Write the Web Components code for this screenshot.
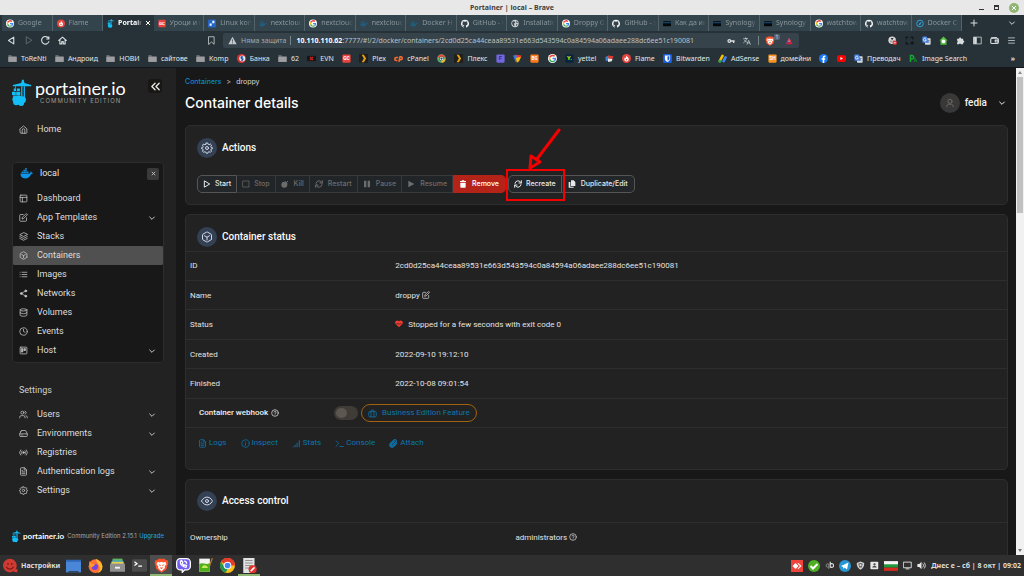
<!DOCTYPE html>
<html lang="en">
<head>
<meta charset="utf-8">
<title>Portainer | local – Brave</title>
<style>
  html, body { margin: 0; height: 100%; }
  body { background: #181818; color: #e6e6e6; font-family: Roboto, "Liberation Sans", sans-serif; font-size: 8px; line-height: 12px; overflow: hidden; }
</style>
</head>
<body>
<desktop-screen>
  <window-title slot="top">Portainer | local – Brave</window-title>
  <tab-strip slot="top">
    <browser-tab icon="google">Google</browser-tab>
    <browser-tab icon="flame">Flame</browser-tab>
    <browser-tab icon="crane" active>Portainer</browser-tab>
    <browser-tab icon="gc">Уроци и н</browser-tab>
    <browser-tab icon="linux">Linux kom</browser-tab>
    <browser-tab icon="dockerdim">nextcloud</browser-tab>
    <browser-tab icon="google">nextcloud</browser-tab>
    <browser-tab icon="dockerdim">nextcloud</browser-tab>
    <browser-tab icon="dockerdim">Docker Hu</browser-tab>
    <browser-tab icon="github">GitHub - n</browser-tab>
    <browser-tab icon="globe">Installatio</browser-tab>
    <browser-tab icon="google">Droppy G</browser-tab>
    <browser-tab icon="github">GitHub - s</browser-tab>
    <browser-tab icon="nas">Как да ин</browser-tab>
    <browser-tab icon="nas">Synology</browser-tab>
    <browser-tab icon="nas">Synology</browser-tab>
    <browser-tab icon="google">watchtow</browser-tab>
    <browser-tab icon="github">watchtow</browser-tab>
    <browser-tab icon="edgeblue">Docker Co</browser-tab>
  </tab-strip>
  <address-bar slot="top"></address-bar>
  <bookmark-bar slot="top">
    <book-mark icon="folder">ToReNti</book-mark>
    <book-mark icon="folder">Андроид</book-mark>
    <book-mark icon="folder">НОВИ</book-mark>
    <book-mark icon="folder">сайтове</book-mark>
    <book-mark icon="folder">Komp</book-mark>
    <book-mark icon="bank">Банка</book-mark>
    <book-mark icon="folder">62</book-mark>
    <book-mark icon="evn">EVN</book-mark>
    <book-mark icon="gc"></book-mark>
    <book-mark icon="plex">Plex</book-mark>
    <book-mark icon="cpanel">cPanel</book-mark>
    <book-mark icon="rainbow"></book-mark>
    <book-mark icon="plex">Плекс</book-mark>
    <book-mark icon="fviolet"></book-mark>
    <book-mark icon="shieldmix"></book-mark>
    <book-mark icon="bg"></book-mark>
    <book-mark icon="google"></book-mark>
    <book-mark icon="yettel">yettel</book-mark>
    <book-mark icon="cubes"></book-mark>
    <book-mark icon="flame">Flame</book-mark>
    <book-mark icon="bitwarden">Bitwarden</book-mark>
    <book-mark icon="adsense">AdSense</book-mark>
    <book-mark icon="sh">домейни</book-mark>
    <book-mark icon="facebook"></book-mark>
    <book-mark icon="youtube"></book-mark>
    <book-mark icon="translate">Преводач</book-mark>
    <book-mark icon="imgsearch">Image Search</book-mark>
  </bookmark-bar>

  <side-bar slot="side">
    <nav-item icon="home">Home</nav-item>
    <environment-box name="local">
      <nav-item icon="layout">Dashboard</nav-item>
      <nav-item icon="edit" more>App Templates</nav-item>
      <nav-item icon="layers">Stacks</nav-item>
      <nav-item icon="box" active>Containers</nav-item>
      <nav-item icon="list">Images</nav-item>
      <nav-item icon="share">Networks</nav-item>
      <nav-item icon="database">Volumes</nav-item>
      <nav-item icon="clock">Events</nav-item>
      <nav-item icon="trello" more>Host</nav-item>
    </environment-box>
    <nav-group name="Settings">
      <nav-item icon="users" more>Users</nav-item>
      <nav-item icon="drive" more>Environments</nav-item>
      <nav-item icon="radio">Registries</nav-item>
      <nav-item icon="file" more>Authentication logs</nav-item>
      <nav-item icon="settings" more>Settings</nav-item>
    </nav-group>
  </side-bar>

  <page-header slot="main" heading="Container details" user="fedia"></page-header>
  <panel-card slot="main" icon="settings" heading="Actions" plain>
    <action-bar></action-bar>
  </panel-card>
  <panel-card slot="main" icon="box" heading="Container status">
    <status-table></status-table>
  </panel-card>
  <panel-card slot="main" icon="eye" heading="Access control" roomy>
    <owner-table></owner-table>
  </panel-card>

  <task-bar slot="bottom"></task-bar>
</desktop-screen>

<script>
const line = (body, w = 2) => `<svg viewBox="0 0 24 24" fill="none" stroke="currentColor" stroke-width="${w}" stroke-linecap="round" stroke-linejoin="round">${body}</svg>`;
const art = (body, box = '0 0 24 24') => `<svg viewBox="${box}">${body}</svg>`;
const googleG = '<path fill="#ea4335" d="M12 6c1.700 0 3.100.600 4.200 1.600l3-3A10 10 0 0 0 3.200 7.600l3.500 2.700A6 6 0 0 1 12 6z"/><path fill="#4285f4" d="M21.600 12.200c0-.700-.100-1.300-.200-1.900H12v3.900h5.400a4.600 4.600 0 0 1-2 3l3.300 2.600a9.800 9.800 0 0 0 2.900-7.600z"/><path fill="#fbbc05" d="M6.700 13.700a6 6 0 0 1 0-3.500L3.200 7.600a9.800 9.800 0 0 0 0 8.800z"/><path fill="#34a853" d="M12 22c2.700 0 5-.900 6.700-2.400l-3.300-2.500a6 6 0 0 1-8.700-3.300l-3.500 2.700A10 10 0 0 0 12 22z"/>';
const crane = '<g fill="#13bef9"><path d="M12 0h2l1 4 8 2.500V8H1V6.500l10-2.500z"/><path d="M11 8h1.500v13H11zM14 8h1.500v13H14zM3.500 8h1v3h-1z"/><path d="M2 10.500h3v3H2zM6 10.500h3.500v3H6zM0 14.500h4.500v4H0zM5 14.500h5v4H5zM1 19h9v1.500H1z"/><circle cx="4.500" cy="23.500" r="4"/><circle cx="12.500" cy="24" r="4.200"/><circle cx="8" cy="22.500" r="3.500"/><circle cx="5" cy="27" r="3.600"/><circle cx="11" cy="28" r="3.500"/><circle cx="8" cy="26" r="4"/></g>';
const whale = (c) => `<path fill="${c}" d="M1 12h17c1-.300 1.500-1.500 1.200-3.200l.800-.800c1.200.700 1.600 1.600 1.500 2.500 1 0 1.800.200 2.500.700-.700 1.600-2 2-3.600 2C18.600 18 15 21 9.500 21 3.500 21 .700 17.500 1 12zM3 8.500h2.700v2.700H3zM6.300 8.500H9v2.700H6.300zM9.600 8.500h2.700v2.700H9.600zM12.900 8.500h2.700v2.700h-2.700zM6.300 5.200H9v2.700H6.300zM9.600 5.200h2.700v2.700H9.600zM9.600 2h2.700v2.600H9.600z"/>`;
const lion = '<path fill="#fb542b" d="M7 1h10l2 2.500 2.500-.500L23 7l-3 11-8 5.500L4 18 1 7l1.500-4 2.500.500z"/><path fill="#fff" d="M6 6l3 1 3-1 3 1 3-1 2 4-3 3 .500 3L12 21l-5.500-5L7 13 4 10z"/><path fill="#fb542b" d="M7 10l4 1-1 2zM17 10l-4 1 1 2zM9 15h6l-3 3z"/>';
const tile = (bg, t, fg = '#fff', size = 13) => art(`<rect x="1" y="1" width="22" height="22" rx="3" fill="${bg}"/><text x="12" y="17" text-anchor="middle" font-family="Roboto, sans-serif" font-weight="700" font-size="${size}" fill="${fg}">${t}</text>`);
const translateArt = '<rect x="8" y="6" width="15" height="17" rx="2" fill="#d9dde3"/><path d="M14 12h7M17.500 10v2c0 3-2 5-3 6M15 14c1 2 3 3.500 5 4" stroke="#5f7185" stroke-width="1.500" fill="none"/><path fill="#4680e0" d="M3 1h10l5 17H3a2 2 0 0 1-2-2V3a2 2 0 0 1 2-2z"/><path d="M11 7.500a4 4 0 1 0 .500 3H8" stroke="#fff" stroke-width="2" fill="none"/>';

const ICONS = {
  home: line('<path d="M3 10l9-7.500 9 7.500v10a2 2 0 0 1-2 2H5a2 2 0 0 1-2-2z"/><path d="M8.500 22v-8.500a3.500 3.500 0 0 1 7 0V22"/>'),
  layout: line('<rect x="3" y="3" width="18" height="18" rx="2"/><path d="M3 9h18M9 21V9"/>'),
  edit: line('<path d="M11 4H4a2 2 0 0 0-2 2v14a2 2 0 0 0 2 2h14a2 2 0 0 0 2-2v-7"/><path d="M18.500 2.500a2.100 2.100 0 0 1 3 3L12 15l-4 1 1-4z"/>'),
  layers: line('<path d="M12 2L2 7l10 5 10-5zM2 12l10 5 10-5M2 17l10 5 10-5"/>'),
  box: line('<path d="M21 16V8a2 2 0 0 0-1-1.700l-7-4a2 2 0 0 0-2 0l-7 4A2 2 0 0 0 3 8v8a2 2 0 0 0 1 1.700l7 4a2 2 0 0 0 2 0l7-4a2 2 0 0 0 1-1.700z"/><path d="M7 9.500l5 3 5-3M12 12.500V18"/>'),
  list: line('<path d="M8 6h13M8 12h13M8 18h13M3 6h.010M3 12h.010M3 18h.010"/>'),
  share: line('<g fill="currentColor"><circle cx="18" cy="5" r="2.500"/><circle cx="6" cy="12" r="2.500"/><circle cx="18" cy="19" r="2.500"/></g><path d="M8.500 13.500l7 4M15.500 6.500l-7 4"/>'),
  database: line('<ellipse cx="12" cy="5" rx="9" ry="3"/><path d="M21 12c0 1.700-4 3-9 3s-9-1.300-9-3M3 5v14c0 1.700 4 3 9 3s9-1.300 9-3V5"/>'),
  clock: line('<circle cx="12" cy="12" r="10"/><path d="M12 6v6l4 2"/>'),
  trello: line('<rect x="3" y="3" width="18" height="18" rx="2"/><path d="M7 7h3v9H7zM14 7h3v5h-3z" fill="currentColor"/>'),
  users: line('<path d="M16 21v-2a4 4 0 0 0-4-4H6a4 4 0 0 0-4 4v2"/><circle cx="9" cy="7" r="4"/><path d="M22 21v-2a4 4 0 0 0-3-3.900M16 3.100a4 4 0 0 1 0 7.800"/>'),
  drive: line('<path d="M22 13H2M5.500 5.500L2 13v5a2 2 0 0 0 2 2h16a2 2 0 0 0 2-2v-5l-3.500-7.500A2 2 0 0 0 16.800 4H7.200a2 2 0 0 0-1.700 1.500zM6 16.500h.010M10 16.500h.010"/>'),
  radio: line('<circle cx="12" cy="12" r="2" fill="currentColor"/><path d="M16.200 7.800a6 6 0 0 1 0 8.500M7.800 16.200a6 6 0 0 1 0-8.500M19.500 5a10 10 0 0 1 0 14M4.500 19a10 10 0 0 1 0-14"/>'),
  file: line('<path d="M14 2H6a2 2 0 0 0-2 2v16a2 2 0 0 0 2 2h12a2 2 0 0 0 2-2V8zM14 2v6h6M16 13H8M16 17H8M10 9H8"/>'),
  settings: line('<circle cx="12" cy="12" r="3"/><path d="M10.500 2h3l.800 2.600 2 .800L18.700 4 21 6.300l-1.400 2.400.800 2 2.600.800v1.500l-2.600 1-.800 2 1.400 2.400-2.300 2.300-2.400-1.300-2 .800-.800 2.300h-3l-.800-2.300-2-.800-2.400 1.300L3 18.400 4.400 16l-.800-2-2.600-1v-1.500l2.600-.800.800-2L3 6.300 5.300 4l2.400 1.400 2-.800z"/>'),
  eye: line('<path d="M1 12s4-8 11-8 11 8 11 8-4 8-11 8-11-8-11-8z"/><circle cx="12" cy="12" r="3"/>'),
  user: line('<circle cx="12" cy="8" r="5"/><path d="M4 21c0-4 3-6 5-6h6c2 0 5 2 5 6"/>'),
  down: line('<path d="M5 9l7 7 7-7"/>', 3),
  collapse: line('<path d="M11 19l-7-7 7-7M20 19l-7-7 7-7"/>', 3),
  close: line('<path d="M5 5l14 14M19 5L5 19"/>', 4),
  help: line('<circle cx="12" cy="12" r="10"/><path d="M9 9a3 3 0 0 1 6 1c0 2-3 2.500-3 4M12 17.500h.010"/>'),
  info: line('<circle cx="12" cy="12" r="10"/><path d="M12 17v-6M12 7.500h.010"/>'),
  play: line('<path d="M5 3l15 9-15 9z"/>', 3),
  playfill: art('<path fill="currentColor" d="M4 2l18 10L4 22z"/>'),
  stop: line('<rect x="3" y="3" width="18" height="18"/>', 2),
  bomb: art('<circle cx="10" cy="14" r="9" fill="currentColor"/><path d="M13 4l6 6M17 7l4-4" stroke="currentColor" stroke-width="3"/>'),
  sync: line('<path d="M3 10a9 9 0 0 1 16-4l3 3M21 14a9 9 0 0 1-16 4l-3-3M22 2v7h-7M2 22v-7h7"/>', 3),
  pause: art('<path fill="currentColor" d="M3 2h7v20H3zM14 2h7v20h-7z"/>'),
  trash: art('<path fill="currentColor" d="M3 3h5l1-2h6l1 2h5v3H3zM4 8h16v13a2 2 0 0 1-2 2H6a2 2 0 0 1-2-2z"/>'),
  copy: art('<path fill="currentColor" d="M9 1h8l5 5v12H9zM2 6h5v14h10v3H2z"/>'),
  heart: art('<path fill="#ef3b30" d="M12 22L2 12a6 6 0 0 1 10-8 6 6 0 0 1 10 8z"/><path d="M4 11h4l1-2 3 5 3-4 1 1h4" fill="none" stroke="#222" stroke-width="1.500"/>'),
  bars: art('<path fill="currentColor" d="M2 19h3v3H2zM7 15h3v7H7zM12 10h3v12h-3zM18 3h3v19h-3z" opacity=".8"/>'),
  prompt: line('<path d="M3 5l7 7-7 7M13 20h9"/>', 2),
  clip: line('<path d="M21 11l-9 9a5.500 5.500 0 0 1-8-8l9-9a3.700 3.700 0 0 1 5.500 5.500l-9 9a1.800 1.800 0 0 1-3-3l8-8"/>', 3),
  briefcase: line('<rect x="2" y="7" width="20" height="14" rx="3"/><path d="M8 21V5a2 2 0 0 1 2-2h4a2 2 0 0 1 2 2v16"/>'),
  back: line('<path d="M18 3v18L4 12z"/>', 3),
  forward: line('<path d="M6 3v18l14-9z"/>', 2),
  reload: line('<path d="M20 6a10 10 0 1 0 1 9M21 2v6h-6"/>', 3),
  house: line('<path d="M2 12L12 3l10 9M5 10v11h5v-6h4v6h5V10"/>', 3),
  bookmark: line('<path d="M5 2h14v20l-7-6-7 6z"/>', 2),
  warn: art('<path fill="#c3c9cc" d="M12 2l11 20H1z"/><path d="M12 9v6M12 17v3" stroke="#36434a" stroke-width="2"/>'),
  key: art('<circle cx="7" cy="12" r="4" fill="none" stroke="currentColor" stroke-width="4"/><path d="M11 12h12M20 12v6" stroke="currentColor" stroke-width="4"/>'),
  lang: line('<path d="M2 5h12M8 2v3M11 5c-1 5-4 9-9 12M4 9c2 3 5 6 8 7M12 22l5-12 5 12M14 18h6"/>'),
  menu: line('<path d="M4 5h16M4 12h16M4 19h16"/>', 2),
  panel: line('<rect x="2" y="3" width="20" height="18"/><path d="M3 4h6v16H3z" fill="currentColor"/>', 2),
  wallet: line('<rect x="2" y="6" width="20" height="14" rx="3"/><path d="M4 5l13-1M14 11h8v5h-8z"/>', 3),
  puzzle: art('<path fill="currentColor" d="M3 7h5a3 3 0 1 1 6 0h5v5a3 3 0 1 1 0 6v4h-6a3 3 0 0 0-5 0H3v-5a3 3 0 0 0 0-5z"/>'),
  blocked: art('<circle cx="11" cy="11" r="10" fill="#d8d8d8"/><path d="M8 5l3 5 3-5M8 12v5M14 12v5" stroke="#444" stroke-width="2"/><circle cx="18" cy="18" r="6" fill="#d93a3a"/><path d="M15 18h6" stroke="#fff" stroke-width="2"/>'),
  capture: line('<g stroke="#11171a"><path d="M3 8V3h5M16 3h5v5M21 15v6M3 15v6h6M18 16v6M15 19h7"/></g>', 3),
  greenhouse: art('<path fill="#55c23c" d="M12 1l11 11h-3v11H4V12H1z"/><circle cx="12" cy="14" r="5" fill="#fff"/>'),
  brave: art(lion),
  rewards: art('<path fill="#ff4724" d="M12 2l6 10H7z"/><path fill="#c08bd0" d="M7 13l5-2 6 2-6 3z"/><path fill="#8a3bb0" d="M12 2L1 22l8-6z"/><path fill="#d8203a" d="M1 22h22l-5-9-6 3z"/>'),
  plus: line('<path d="M12 3v18M3 12h18"/>', 3),
  google: art('<circle cx="12" cy="12" r="12" fill="#fff"/>' + googleG),
  flame: art('<circle cx="12" cy="12" r="12" fill="#e8443b"/><path fill="#fff" d="M12 4c1 4 6 5 6 10a6 6 0 0 1-12 0c0-2 1-4 2-5l2 2z"/><circle cx="12" cy="15" r="2" fill="#e8443b"/>'),
  crane: art(crane, '0 0 24 32'),
  whale: art(whale('#0d96ea')),
  dockerdim: art(whale('#225b7c')),
  gc: tile('#e8443b', 'GC', '#fff', 13),
  linux: art('<rect width="24" height="24" rx="3" fill="#2465c8"/><path fill="#fff" d="M13 4h6v7h-6zM5 12h6v7H5z"/>'),
  github: art('<path fill="#f2f2f2" d="M12 .500a12 12 0 0 0-3.800 23.400c.600.100.800-.300.800-.600v-2c-3.300.700-4-1.600-4-1.600-.600-1.400-1.400-1.800-1.400-1.800-1-.700.100-.700.100-.700 1.200 0 1.900 1.200 1.900 1.200 1 1.800 2.800 1.300 3.500 1 0-.800.400-1.300.700-1.600-2.700-.300-5.500-1.300-5.500-6 0-1.200.500-2.300 1.300-3.100-.200-.400-.600-1.600 0-3.200 0 0 1-.300 3.400 1.200a11 11 0 0 1 6 0c2.300-1.500 3.300-1.200 3.300-1.200.600 1.600.200 2.800 0 3.200.900.800 1.300 1.900 1.300 3.200 0 4.600-2.800 5.600-5.500 5.900.500.400.900 1 .900 2.200v3.300c0 .300.100.700.800.600A12 12 0 0 0 12 .500z"/>'),
  globe: art('<circle cx="12" cy="12" r="11" fill="#c8ced1"/><path fill="#3a4850" d="M5 5l6 1 2 4-5 3 3 4-3 3-5-7zM15 3l6 6-4 2zM15 14l5 1-4 5z"/>'),
  nas: art('<rect x="0" y="5" width="24" height="15" rx="2" fill="#05080a"/><path fill="#1c79c0" d="M0 9h24v2H0z"/>'),
  edgeblue: art('<circle cx="12" cy="12" r="10" fill="none" stroke="#2c9fd8" stroke-width="3"/><path fill="#2c9fd8" d="M7 19l3-8 7-5-3 8z"/>'),
  folder: art('<path fill="#77797e" d="M1 3h8l2 3h12v15H1z"/><path fill="#9d9ea2" d="M1 8h22v13H1z"/>'),
  bank: art('<circle cx="12" cy="12" r="12" fill="#d8322f"/><circle cx="14" cy="12" r="8" fill="#e8eef6"/><path fill="#1b4fa0" d="M10 6h7l-3 5 4 1-2 6h-6l3-5-4-1z"/>'),
  evn: art('<rect x="0" y="5" width="24" height="14" fill="#161616"/><path stroke="#c22" stroke-width="3" d="M8 8l8 8M16 8l-8 8"/>'),
  plex: art('<rect width="24" height="24" fill="#1f1f1f"/><path fill="#e5a00d" d="M7 2h6l6 10-6 10H7l6-10z"/>'),
  cpanel: art('<g fill="none" stroke="#ff6c2c" stroke-width="4"><path d="M11 9H6a4 4 0 0 0 0 8h3M13 21l3-14h2a4 4 0 0 1 0 8h-3"/></g>'),
  rainbow: art('<circle cx="12" cy="12" r="9" fill="none" stroke="#58b368" stroke-width="5"/><path d="M4 9a9 9 0 0 1 16 0" fill="none" stroke="#ef4b3d" stroke-width="5"/><path d="M20 14a9 9 0 0 1-8 7" fill="none" stroke="#f5b82e" stroke-width="5"/><circle cx="12" cy="12" r="5" fill="#e9f1f5"/><circle cx="12" cy="12" r="3" fill="#345"/>'),
  fviolet: tile('#7466dd', 'F', '#352b8a', 16),
  shieldmix: art('<path fill="#3978e8" d="M0 4l10-2 3 8-6 12z"/><path fill="#e8382f" d="M8 2l15 2-4 9-8-3z"/><path fill="#fbbc05" d="M8 10l13-2-5 11-6 4z"/>'),
  bg: tile('#ff7a1a', 'BG', '#fff', 12),
  yettel: tile('#08243f', 'Y.', '#b4ff00', 16),
  cubes: art('<path fill="#3b82d0" d="M1 8l9-4v13l-8 2z"/><path fill="#e23c2e" d="M8 4l15 2-4 8-10-2z"/><path fill="#e8e8e8" d="M8 12l12 1-2 6-10 2z"/>'),
  bitwarden: art('<rect width="24" height="24" rx="4" fill="#175ddc"/><path fill="#fff" d="M5 4h14v9c0 4-4 6-7 8-3-2-7-4-7-8z"/><path fill="#175ddc" d="M12 6h5v7c0 2-3 4-5 5z"/>'),
  adsense: art('<path stroke="#fbbc04" stroke-width="7" stroke-linecap="round" d="M12 5L5 18"/><path stroke="#4285f4" stroke-width="7" stroke-linecap="round" d="M20 9l-5 10"/><circle cx="5" cy="19" r="4" fill="#34a853"/>'),
  sh: tile('#f7941d', 'SH', '#fff', 13),
  facebook: art('<circle cx="12" cy="12" r="12" fill="#1877f2"/><path fill="#fff" d="M10 24v-9H7v-4h3V9c0-3 2-5 5-5h2v4h-2c-1 0-1 1-1 1v2h3l-1 4h-2v9z"/>'),
  youtube: art('<rect y="3" width="24" height="18" rx="5" fill="#f00"/><path fill="#fff" d="M9 8l7 4-7 4z"/>'),
  translate: art(translateArt),
  imgsearch: art('<path fill="none" stroke="#18a832" stroke-width="4" d="M4 21V4h4a4 4 0 0 1 0 9H5"/><path fill="none" stroke="#0a7c22" stroke-width="3" d="M13 21l3-9 5 9M14 18h7"/>'),
  devil: art('<circle cx="11" cy="12" r="11" fill="#cf3b32"/><path fill="#cf3b32" d="M18 18l5-1v6l-6-1z"/><path d="M5 14c3 5 9 5 12 0M8 8v3M14 8v3" stroke="#7a1a16" stroke-width="2" fill="none"/>'),
  desktop: art('<rect x="0" y="3" width="24" height="20" fill="#4a86d8"/><path fill="#2e67b5" d="M0 3h24v3H0z"/><path fill="#2f3b4c" d="M4 21h16v2H4z"/>'),
  firefox: art('<circle cx="12" cy="13" r="11" fill="#ff7139"/><path fill="#ffbd2e" d="M13 1c4 3 9 6 10 12a11 11 0 0 1-8 11c4-3 5-8 3-11-1-4-5-6-5-12z"/><circle cx="11" cy="14" r="5" fill="#7542e5"/><path fill="#ff9a2b" d="M2 5l4 4 6 1-4 4-5 1z"/>'),
  files: art('<path fill="#5fb563" d="M4 1h16v7H4z"/><path fill="#3fa2c8" d="M3 4h18v5H3z"/><path fill="#e5cf4e" d="M2 6h20v4H2z"/><path fill="#8f8f8f" d="M0 9h24v13H0z"/><path fill="#f4f4f4" d="M8 14h8v3H8z"/>'),
  terminal: art('<rect y="2" width="24" height="20" rx="2" fill="#4b4b4b"/><path fill="none" stroke="#fff" stroke-width="2" d="M4 6l4 3-4 3M10 13h6"/>'),
  viber: art('<path fill="#7360f2" stroke="#fff" stroke-width="2" d="M7 1h10a6 6 0 0 1 6 6v6a6 6 0 0 1-6 6h-3l-4 4v-4H7a6 6 0 0 1-6-6V7a6 6 0 0 1 6-6z"/><path fill="none" stroke="#fff" stroke-width="2" d="M7 5c-1 5 4 10 9 10l1-3-3-1-1 1-3-3 1-2-2-3zM13 5c3 0 4 2 4 4"/>'),
  notepad: art('<path fill="#f2f3ee" d="M2 1h17v21H2z"/><path fill="#4fb01c" d="M2 10c5-4 10 2 17-2v14H2z"/><path fill="#c9e85c" d="M7 13c4-3 8 0 9 3H6z"/><path stroke="#b07d2d" stroke-width="2" d="M23 0l-5 14"/>'),
  chrome: art('<circle cx="12" cy="12" r="12" fill="#fbc116"/><path fill="#e33b2e" d="M12 12H24A12 12 0 0 0 1.600 6z"/><path fill="#e33b2e" d="M1.600 6A12 12 0 0 1 22.400 6H12z"/><path fill="#219653" d="M1.600 6L7 15l5 3-3 5.600A12 12 0 0 1 1.600 6z"/><circle cx="12" cy="12" r="6" fill="#fff"/><circle cx="12" cy="12" r="4.500" fill="#4285f4"/>'),
  editor: art('<path fill="#e3e3e3" d="M2 0h18v24H2z"/><path stroke="#8b8b8b" stroke-width="1.500" d="M5 4h12M5 8h12M5 12h12M5 16h8"/><circle cx="17" cy="18" r="6.500" fill="#e2332c"/><path stroke="#fff" stroke-width="2.500" d="M14 21l6-6"/>'),
  anydesk: art('<rect width="24" height="24" fill="#ef443b"/><path fill="#fff" d="M3 12l6-6 6 6-6 6zM13 7l2-1 6 6-6 6-2-1 5-5z"/>'),
  check: art('<circle cx="12" cy="12" r="12" fill="#4caf24"/><path fill="none" stroke="#fff" stroke-width="4" d="M5 12l5 5 9-9"/>'),
  qb: art('<g fill="none" stroke-width="3"><path stroke="#777" d="M10 9a4 4 0 1 0 0 6M10 7v14"/><path stroke="#ddd" d="M14 2v16M14 9a5 5 0 1 1 0 6"/></g>'),
  telegram: art('<circle cx="12" cy="12" r="12" fill="#2796d3"/><path fill="#fff" d="M4 12l15-7-3 14-5-4-2 3-1-4z"/>'),
  shield: art('<path fill="#d5d5d5" d="M12 1l10 4c0 9-3 14-10 18C5 19 2 14 2 5z"/><path fill="#555" d="M12 5l6 2-3 10h-6L6 7z"/><circle cx="12" cy="11" r="3" fill="#ddd"/>'),
  contact: art('<rect x="1" y="2" width="21" height="20" rx="2" fill="#e8e8e8"/><circle cx="12" cy="9" r="3" fill="#444"/><path fill="#444" d="M6 17c1-5 11-5 12 0z"/>'),
  flag: art('<path fill="#f4f4f4" d="M0 0h30v8H0z"/><path fill="#1c9a3b" d="M0 7h30v7H0z"/><path fill="#d52b1e" d="M0 14h30v7H0z"/>', '0 0 30 21'),
  screen: line('<rect x="2" y="3" width="20" height="15"/><path d="M8 21h8"/>', 2.5),
  sound: art('<path fill="#e8e8e8" d="M1 8h5l6-6v20l-6-6H1z"/><path fill="none" stroke="#ddd" stroke-width="2.500" d="M15 7c3 3 3 7 0 10M19 4c4 5 4 11 0 16"/>')
};

/* Registers an element whose shadow tree is built from a stylesheet and a markup function. */
function component(tag, css, markup) {
  customElements.define(tag, class extends HTMLElement {
    constructor() { super(); this.attachShadow({ mode: 'open' }); }
    connectedCallback() {
      const t = document.createElement('template');
      t.innerHTML = `<style>*{box-sizing:border-box}button,input{font:inherit;color:inherit}${css}</style>${markup(this)}`;
      this.shadowRoot.replaceChildren(t.content.cloneNode(true));
    }
  });
}

component('ui-icon', `
  :host { display: inline-block; flex: none; width: 9px; height: 9px; }
  svg { display: block; width: 100%; height: 100%; }`,
  el => ICONS[el.getAttribute('name')] || '');

component('desktop-screen', `
  :host { display: flex; flex-direction: column; height: 100vh; }
  .view { flex: 1; min-height: 0; display: flex; overflow: hidden; }
  main { flex: 1; min-width: 0; padding: 8px 8px 0 9px; display: flex; flex-direction: column; gap: 9px; overflow: hidden; }
  main ::slotted(*) { flex: none; }`,
  () => `<header><slot name="top"></slot></header>
  <div class="view"><slot name="side"></slot><main><slot name="main"></slot></main><scroll-rail></scroll-rail></div>
  <footer><slot name="bottom"></slot></footer>`);

component('window-title', `
  :host { display: grid; grid-template-columns: 1fr auto 1fr; align-items: center; height: 15px; background: #e8e8e8; color: #3f3f3f; font: 700 7px/15px "Noto Sans", sans-serif; }
  .btns { display: flex; justify-content: flex-end; align-items: center; gap: 10px; padding-right: 5px; }
  button { all: unset; box-sizing: border-box; display: grid; place-items: center; width: 5px; height: 5px; }
  .min { border-bottom: 1px solid #333; } .max { border: 1px solid #333; border-top-width: 2px; }
  .x { width: 10px; height: 10px; border-radius: 50%; background: #8fb573; color: #fff; }
  ui-icon { width: 6px; height: 6px; }`,
  () => `<span></span><span><slot></slot></span><div class="btns"><button class="min" aria-label="Minimize"></button><button class="max" aria-label="Maximize"></button><button class="x" aria-label="Close"><ui-icon name="close"></ui-icon></button></div>`);

component('tab-strip', `
  :host { display: flex; height: 16px; background: #273238; padding-left: 2px; color: #d7dcde; }
  .tabs { flex: 1; min-width: 0; display: flex; }
  .end { width: 62px; display: flex; align-items: center; justify-content: space-between; padding: 0 8px; }
  button { all: unset; display: flex; } ui-icon { width: 8px; height: 8px; }`,
  () => `<div class="tabs" role="tablist"><slot></slot></div><div class="end"><button aria-label="New tab"><ui-icon name="plus"></ui-icon></button><button aria-label="Search tabs"><ui-icon name="down"></ui-icon></button></div>`);

component('browser-tab', `
  :host { flex: 1 1 0; min-width: 0; display: block; background: #34444c; }
  :host([active]) { background: #273238; }
  .tab { all: unset; box-sizing: border-box; display: flex; align-items: center; gap: 4px; width: 100%; height: 16px; padding: 0 2px 0 4px; border-right: 1px solid #54626a; font: 7px/16px "Noto Sans", sans-serif; color: #89969c; }
  :host([active]) .tab { color: #fff; font-weight: 700; border-color: transparent; gap: 3px; }
  .text { flex: 1; min-width: 0; overflow: hidden; white-space: nowrap; -webkit-mask-image: linear-gradient(90deg, #000 80%, transparent); mask-image: linear-gradient(90deg, #000 80%, transparent); }
  ui-icon { width: 8px; height: 9px; } .x { width: 6px; height: 6px; }`,
  el => `<button class="tab" role="tab"><ui-icon name="${el.getAttribute('icon')}"></ui-icon><span class="text"><slot></slot></span>${el.hasAttribute('active') ? '<ui-icon class="x" name="close"></ui-icon>' : ''}</button>`);

component('address-bar', `
  :host { display: flex; align-items: center; height: 19px; background: #273238; color: #d7dcde; font: 7px/14px "Noto Sans", sans-serif; }
  button { all: unset; display: flex; }
  .nav { display: flex; gap: 8px; padding-left: 7px; width: 207px; flex: none; }
  .nav .off { opacity: .4; }
  .field { flex: 1; min-width: 0; margin: 0 0 0 7px; height: 15px; display: flex; align-items: center; background: #36434a; border-radius: 2px; padding: 0 5px; }
  .note { color: #a2abaf; padding: 0 4px; white-space: nowrap; }
  .bar { width: 1px; height: 9px; background: #76838a; }
  label { color: #fff; font-weight: 700; padding-left: 5px; }
  input { flex: 1; min-width: 0; border: 0; padding: 0; background: none; outline: 0; color: #b9c1c5; height: 14px; }
  .tools { display: flex; align-items: center; gap: 6px; }
  .tools ui-icon { width: 10px; height: 8px; }
  .ext { display: flex; gap: 8px; width: 225px; flex: none; justify-content: flex-end; padding-right: 8px; }
  .brave { position: relative; padding-right: 3px; }
  .brave i { position: absolute; right: -2px; top: -2px; width: 6px; height: 6px; border-radius: 2px; background: #5b6579; font: 5px/6px Roboto, sans-serif; text-align: center; }
  .tools .brave ui-icon { height: 10px; }`,
  () => {
    const b = (n, l, c = '') => `<button class="${c}" aria-label="${l}"><ui-icon name="${n}"></ui-icon></button>`;
    return `<div class="nav">${b('back', 'Back')}${b('forward', 'Forward', 'off')}${b('reload', 'Reload')}${b('house', 'Home')}</div>${b('bookmark', 'Bookmark page')}
    <div class="field"><ui-icon name="warn"></ui-icon><span class="note">Няма защита</span><span class="bar"></span>
      <label for="url">10.110.110.62</label><input id="url" value=":7777/#!/2/docker/containers/2cd0d25ca44ceaa89531e663d543594c0a84594a06adaee288dc6ee51c190081">
      <div class="tools">${b('key', 'Passwords')}${b('lang', 'Translate')}<span class="bar"></span><button class="brave" aria-label="Shields"><ui-icon name="brave"></ui-icon><i>1</i></button>${b('rewards', 'Rewards')}</div></div>
    <div class="ext">${b('blocked', 'Blocker')}${b('capture', 'Capture')}${b('translate', 'Translator')}${b('greenhouse', 'Home extension')}${b('puzzle', 'Extensions')}${b('panel', 'Sidebar')}${b('wallet', 'Wallet')}${b('menu', 'Menu')}</div>`;
  });

component('bookmark-bar', `
  :host { display: flex; height: 17px; background: #273238; border-bottom: 1px solid #12181b; align-items: center; color: #e4e7e8; font: 7px/16px "Noto Sans", sans-serif; padding: 0 9px 0 8px; }
  nav { flex: 1; min-width: 0; display: flex; align-items: center; justify-content: space-between; }
  button { all: unset; width: 48px; text-align: right; font-weight: 700; }`,
  () => `<nav><slot></slot></nav><button aria-label="More bookmarks">»</button>`);

component('book-mark', `
  :host { display: block; }
  a { display: flex; align-items: center; gap: 4px; color: inherit; text-decoration: none; white-space: nowrap; }`,
  el => `<a href="#" aria-label="${el.textContent || el.getAttribute('icon')}"><ui-icon name="${el.getAttribute('icon')}"></ui-icon>${el.textContent ? '<slot></slot>' : ''}</a>`);

component('scroll-rail', `
  :host { display: flex; flex-direction: column; justify-content: space-between; width: 8px; background: #f1f1f1; }
  i { width: 0; height: 0; margin: 3px 2px; border: 2px solid transparent; border-top: 0; border-bottom: 3px solid #8a8a8a; }
  i.d { border-top: 3px solid #777; border-bottom: 0; }
  b { display: block; height: 28%; margin: 0 1px; background: #c1c1c1; }
  .grow { flex: 1; }`,
  () => `<i></i><b></b><span class="grow"></span><i class="d"></i>`);

component('side-bar', `
  :host { flex: none; display: flex; flex-direction: column; width: 176px; background: #222; padding: 11px 12px 12px; box-sizing: border-box; }
  .brand { display: flex; align-items: flex-start; height: 41px; }
  .crane { width: 20px; height: 28px; margin-right: 3px; }
  .word { flex: 1; color: #fff; font: 18px/19px Lato, sans-serif; }
  small { display: block; font: 6px/6px Inter, sans-serif; letter-spacing: 1px; color: #9a9a9a; padding-left: 5px; white-space: nowrap; }
  .fold { all: unset; display: grid; place-items: center; width: 14px; height: 14px; background: #191714; border-radius: 3px; color: #e6e6e6; margin-right: 2px; }
  .fold ui-icon { width: 11px; height: 11px; }
  .foot { margin-top: auto; display: flex; align-items: center; height: 14px; white-space: nowrap; font: 6px/14px Inter, sans-serif; color: #a8a8a8; }
  .foot ui-icon { width: 9px; height: 13px; margin-right: 2px; }
  .foot b { color: #fff; font: 700 8px/14px Lato, sans-serif; margin-right: 3px; }
  .foot a { color: #1f9bd8; text-decoration: none; margin-left: auto; font-weight: 500; }`,
  () => `<div class="brand"><ui-icon class="crane" name="crane"></ui-icon><div class="word">portainer.io<small>COMMUNITY EDITION</small></div><button class="fold" aria-label="Collapse sidebar"><ui-icon name="collapse"></ui-icon></button></div>
  <slot></slot>
  <div class="foot"><ui-icon name="crane"></ui-icon><b>portainer.io</b><span>Community Edition 2.15.1</span><a href="#">Upgrade</a></div>`);

component('nav-item', `
  :host { display: block; }
  a { display: flex; align-items: center; height: 19px; padding: 0 8px 0 7px; gap: 9px; color: #dedede; text-decoration: none; font: 9px/19px Roboto, sans-serif; border-radius: 3px; }
  :host([active]) a { background: #505050; }
  span { flex: 1; } ui-icon { color: #c8c8c8; } .more { width: 8px; height: 8px; }`,
  el => `<a href="#"><ui-icon name="${el.getAttribute('icon')}"></ui-icon><span><slot></slot></span>${el.hasAttribute('more') ? '<ui-icon class="more" name="down"></ui-icon>' : ''}</a>`);

component('environment-box', `
  :host { display: block; margin-top: 23px; background: #181818; outline: 1px solid #2b2d30; outline-offset: -1px; border-radius: 4px; padding-bottom: 3px; }
  .head { display: flex; align-items: center; height: 23px; margin-bottom: 4px; padding: 0 5px 0 8px; gap: 7px; font: 9px/19px Roboto, sans-serif; color: #e4e4e4; }
  .whale { width: 13px; height: 13px; } .head span { flex: 1; }
  button { all: unset; display: grid; place-items: center; width: 12px; height: 12px; border-radius: 2px; background: #3a3a3a; color: #ccc; }
  .x { width: 5px; height: 5px; }`,
  el => `<div class="head"><ui-icon class="whale" name="whale"></ui-icon><span>${el.getAttribute('name')}</span><button aria-label="Disconnect"><ui-icon class="x" name="close"></ui-icon></button></div><slot></slot>`);

component('nav-group', `
  :host { display: block; margin-top: 18px; }
  h2 { margin: 0 0 5px; padding-left: 7px; font: 400 9px/19px Roboto, sans-serif; color: #cfcfcf; }`,
  el => `<h2>${el.getAttribute('name')}</h2><slot></slot>`);

component('page-header', `
  :host { display: block; height: 40px; }
  nav { display: flex; gap: 5px; font: 7px/12px Inter, sans-serif; color: #d8d8d8; }
  nav a { color: #0e86c4; text-decoration: none; font-weight: 500; }
  .row { display: flex; align-items: center; justify-content: space-between; margin-top: 5px; height: 20px; }
  h1 { margin: 0; font: 500 14px/20px Inter, sans-serif; color: #fff; }
  button { all: unset; display: flex; align-items: center; gap: 5px; color: #f0f0f0; font: 500 10px/20px Roboto, sans-serif; padding-right: 2px; }
  i { display: grid; place-items: center; width: 20px; height: 20px; border-radius: 50%; background: #383838; color: #79706a; }
  i ui-icon { width: 10px; height: 10px; }
  .d { width: 8px; height: 8px; margin-left: 6px; }`,
  el => `<nav aria-label="Breadcrumb"><a href="#">Containers</a><span>&gt;</span><span>droppy</span></nav>
  <div class="row"><h1>${el.getAttribute('heading')}</h1><button><i><ui-icon name="user"></ui-icon></i>${el.getAttribute('user')}<ui-icon class="d" name="down"></ui-icon></button></div>`);

component('panel-card', `
  :host { display: block; background: #222; border: 1px solid #2e2e2e; border-radius: 5px; }
  header { display: flex; align-items: center; gap: 5px; height: 37px; padding: 7px 11px 0; border-bottom: 1px solid #2e2e2e; }
  :host([plain]) header { border-color: transparent; }
  :host([roomy]) header { height: 43px; padding: 0 11px; }
  i { display: grid; place-items: center; width: 20px; height: 20px; border-radius: 50%; background: #344054; color: #d0d9e6; }
  i ui-icon { width: 12px; height: 12px; }
  h2 { margin: 0; font: 500 10px/20px Roboto, sans-serif; color: #fafafa; }`,
  el => `<header><i><ui-icon name="${el.getAttribute('icon')}"></ui-icon></i><h2>${el.getAttribute('heading')}</h2></header><slot></slot>`);

component('action-button', `
  :host { display: block; }
  button { display: flex; align-items: center; gap: 4px; height: 18px; padding: 0 5px; margin: 0; border: 1px solid #555; border-left-width: 0; background: #23272a; color: #e8e8e8; font: 500 7px/16px Inter, sans-serif; white-space: nowrap; }
  :host([off]) button { color: #6c6c6c; background: #222527; border-color: #38393a; }
  :host([wide]) button { gap: 5px; }
  :host([danger]) button { background: #b42318; border-color: #b42318; color: #fff; }
  :host([start]) button { border-left-width: 1px; border-radius: 5px 0 0 5px; }
  :host([end]) button { border-radius: 0 5px 5px 0; padding: 0 6px; }
  ui-icon { width: 8px; height: 8px; }`,
  el => `<button${el.hasAttribute('off') ? ' disabled' : ''}><ui-icon name="${el.getAttribute('icon')}"></ui-icon><slot></slot></button>`);

component('action-bar', `
  :host { display: flex; gap: 2px; padding: 12px 11px 11px; }
  div { display: flex; }
  .marked { position: relative; }
  .box { position: absolute; inset: -6px -3px -8px -2px; border: 2px solid #f40000; pointer-events: none; z-index: 1; }
  svg { position: absolute; left: 18px; top: -47px; width: 36px; height: 44px; pointer-events: none; }`,
  () => `<div><action-button icon="play" start>Start</action-button><action-button icon="stop" off>Stop</action-button><action-button icon="bomb" off wide>Kill</action-button><action-button icon="sync" off wide>Restart</action-button><action-button icon="pause" off wide>Pause</action-button><action-button icon="playfill" off wide>Resume</action-button><action-button icon="trash" danger end wide>Remove</action-button></div>
  <div><div class="marked"><action-button icon="sync" start>Recreate</action-button><span class="box"></span>
  <svg viewBox="0 0 36 44"><path d="M33 2L11 31" stroke="#f40000" stroke-width="3" stroke-linecap="round"/><path d="M4 40L5 28 14 34z" fill="none" stroke="#f40000" stroke-width="3" stroke-linejoin="round"/></svg></div>
  <action-button icon="copy" end wide>Duplicate/Edit</action-button></div>`);

const tableCss = `
  table { width: 100%; border-collapse: collapse; table-layout: fixed; color: #e2e2e2; }
  th, td { text-align: left; font-weight: 400; padding: 0 4px; border-bottom: 1px solid #2e2e2e; }
  td ui-icon { width: 8px; height: 8px; vertical-align: -1px; }`;

component('status-table', `
  :host { display: block; } ${tableCss}
  table { height: 147px; } th { width: 25%; } th, td { padding-top: 1px; }
  .gap { margin-right: 5px; }
  .hook { display: flex; align-items: center; height: 29px; padding-left: 13px; border-bottom: 1px solid #2e2e2e; color: #f0f0f0; }
  .hook label { width: 135px; font-weight: 500; } .hook label ui-icon { width: 8px; height: 8px; vertical-align: -2px; margin-left: 3px; }
  input { appearance: none; margin: 0 3px 0 0; width: 24px; height: 14px; border-radius: 7px; background: #3f3b37; padding: 2px; }
  input::before { content: ""; display: block; width: 11px; height: 10px; border-radius: 50%; background: #5c5751; }
  a { color: #0b76b0; text-decoration: none; display: flex; align-items: center; }
  .be { height: 18px; border: 1px solid #a3620f; border-radius: 9px; padding: 0 6px; gap: 5px; }
  .links { display: flex; gap: 14px; height: 41px; padding: 9px 0 0 12px; align-items: flex-start; }
  .links a { gap: 2px; height: 12px; } .links ui-icon, .be ui-icon { width: 9px; height: 9px; }`,
  () => `<table><tr><th scope="row">ID</th><td>2cd0d25ca44ceaa89531e663d543594c0a84594a06adaee288dc6ee51c190081</td></tr>
  <tr><th scope="row">Name</th><td>droppy <ui-icon name="edit"></ui-icon></td></tr>
  <tr><th scope="row">Status</th><td><ui-icon class="gap" name="heart"></ui-icon>Stopped for a few seconds with exit code 0</td></tr>
  <tr><th scope="row">Created</th><td>2022-09-10 19:12:10</td></tr>
  <tr><th scope="row">Finished</th><td>2022-10-08 09:01:54</td></tr></table>
  <div class="hook"><label for="hook">Container webhook<ui-icon name="help"></ui-icon></label><input type="checkbox" id="hook" disabled><a class="be" href="#"><ui-icon name="briefcase"></ui-icon>Business Edition Feature</a></div>
  <div class="links"><a href="#"><ui-icon name="file"></ui-icon>Logs</a><a href="#"><ui-icon name="info"></ui-icon>Inspect</a><a href="#"><ui-icon name="bars"></ui-icon>Stats</a><a href="#"><ui-icon name="prompt"></ui-icon>Console</a><a href="#"><ui-icon name="clip"></ui-icon>Attach</a></div>`);

component('owner-table', `
  :host { display: block; padding-bottom: 12px; } ${tableCss}
  table { height: 29px; } th { width: 40%; } th, td { border: 0; } td { padding-left: 1px; }`,
  () => `<table><tr><th scope="row">Ownership</th><td>administrators <ui-icon name="help"></ui-icon></td></tr></table>`);

component('task-bar', `
  :host { display: flex; align-items: center; justify-content: space-between; height: 21px; background: #2f2f2f; color: #dedede; font: 700 7px/21px "Noto Sans", sans-serif; white-space: nowrap; }
  div { display: flex; align-items: center; }
  button { all: unset; box-sizing: border-box; display: flex; align-items: center; height: 21px; }
  .apps button { width: 22px; justify-content: center; border-bottom: 2px solid transparent; padding-top: 1px; }
  .apps ui-icon { width: 15px; height: 15px; }
  .apps .menu { width: 62px; justify-content: flex-start; padding-left: 3px; gap: 3px; }
  .apps .on { border-color: #8fb573; } .apps .hot { background: #4d4d4d; }
  .tray { gap: 5px; padding-right: 3px; } .tray .lg { width: 12px; height: 12px; } .tray .fl { width: 14px; height: 10px; }`,
  () => {
    const app = (n, c = '') => `<button class="${c}" aria-label="${n}"><ui-icon name="${n}"></ui-icon></button>`;
    return `<div class="apps"><button class="menu"><ui-icon name="devil"></ui-icon>Настройки</button>${app('desktop')}${app('firefox')}${app('files')}${app('terminal')}${app('brave', 'on hot')}${app('viber')}${app('notepad')}${app('chrome')}${app('editor', 'on')}</div>
    <div class="tray"><ui-icon class="lg" name="anydesk"></ui-icon><ui-icon class="lg" name="check"></ui-icon><ui-icon name="qb"></ui-icon><ui-icon class="lg" name="telegram"></ui-icon><ui-icon name="shield"></ui-icon><ui-icon name="contact"></ui-icon><ui-icon class="fl" name="flag"></ui-icon><ui-icon name="screen"></ui-icon><ui-icon name="sound"></ui-icon><span>Днес е – сб | 8 окт | 09:02</span></div>`;
  });
</script>
</body>
</html>
